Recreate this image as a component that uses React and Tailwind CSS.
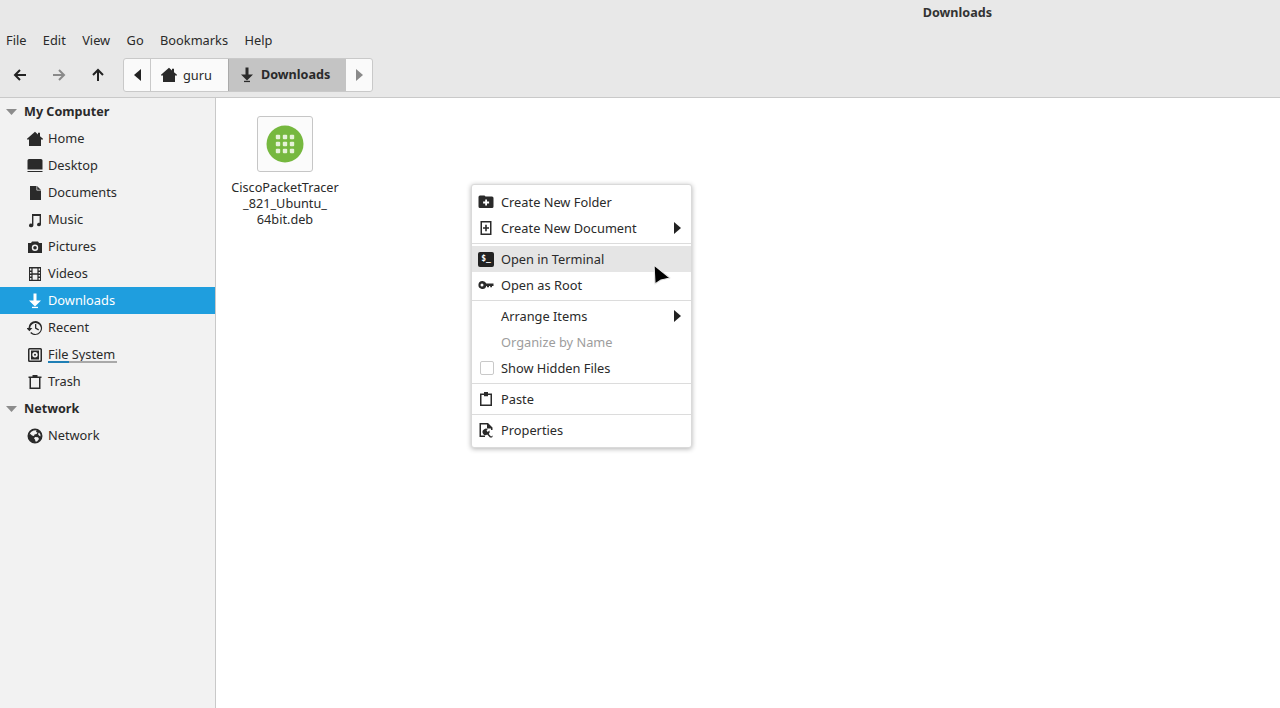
import React from "react";

const I = ({ children, s = 16, vb = 16, className = "" }) => (
  <svg width={s} height={s} viewBox={`0 0 ${vb} ${vb}`} className={`shrink-0 ${className}`} fill="currentColor">{children}</svg>
);
const HomeI = () => <I><path d="M8 .8 L11 3.4 V1.8 H13 V5.2 L16 7.8 V8.4 H14 V15 H2 V8.4 H0 V7.8 Z" /></I>;
const DesktopI = () => <I><path d="M2 1 H14 A1.5 1.5 0 0 1 15.5 2.5 V11.6 H.5 V2.5 A1.5 1.5 0 0 1 2 1Z M.5 13 H15.5 V14 H.5Z" /></I>;
const DocI = () => <I><path d="M3 1 H10 L14 5 V15 H3 Z" /><path d="M9.8 1 V5.2 H14" fill="none" stroke="#f2f2f2" strokeWidth=".7" /></I>;
const MusicI = () => <I><path d="M5 2 H14 V12.5 A2 1.8 0 1 1 12.6 10.8 V4 H6.4 V13.5 A2.2 1.8 0 1 1 5 11.8 Z" /></I>;
const CamI = () => <I><path fillRule="evenodd" d="M5 2.5 H11 L12 4 H15 V14 H1 V4 H4 Z M8 5.5 A3.2 3.2 0 1 0 8 11.9 A3.2 3.2 0 0 0 8 5.5Z" /><circle cx="8" cy="8.7" r="1.8" /></I>;
const VidI = () => <I><path fillRule="evenodd" d="M2 1 H14 V15 H2 Z M3 2.5 V4.5 H4.4 V2.5Z M3 6 V7.5 H4.4 V6Z M3 9 V10.5 H4.4 V9Z M3 12 V13.7 H4.4 V12Z M11.6 2.5 V4.5 H13 V2.5Z M11.6 6 V7.5 H13 V6Z M11.6 9 V10.5 H13 V9Z M11.6 12 V13.7 H13 V12Z M5.6 2.5 V7.3 H10.4 V2.5Z M5.6 8.7 V13.7 H10.4 V8.7Z" /></I>;
const DownI = ({ s = 16 }) => <I s={s}><path d="M6.5 .5 H9.5 V7.5 H14 L8 13.6 L2 7.5 H6.5 Z" /><rect x="5" y="13.8" width="6" height="1.3" /></I>;
const RecentI = () => <I><path d="M8.5 1 A7 7 0 1 1 3.2 13 L4.3 11.9 A5.4 5.4 0 1 0 3.1 8 H5.4 L2.4 11.2 L-.6 8 H1.5 A7 7 0 0 1 8.5 1Z" /><path d="M8 4 H9.3 V7.7 L12 9.3 L11.4 10.4 L8 8.4Z" /></I>;
const DiskI = () => <I><path fillRule="evenodd" d="M2.5 1 H13.5 A1.5 1.5 0 0 1 15 2.5 V13.5 A1.5 1.5 0 0 1 13.5 15 H2.5 A1.5 1.5 0 0 1 1 13.5 V2.5 A1.5 1.5 0 0 1 2.5 1Z M2.5 2.5 V13.5 H13.5 V2.5Z" /><path fillRule="evenodd" d="M4 3.5 H12 V12.5 H4Z M8 5 A2.7 2.7 0 1 0 8 10.4 A2.7 2.7 0 0 0 8 5Z" /><circle cx="8" cy="7.7" r="1" /></I>;
const TrashI = () => <I><path fillRule="evenodd" d="M5.5 1 H10.5 V2.5 H14.5 V4 H13.5 V15 H2.5 V4 H1.5 V2.5 H5.5 Z M4 4 V13.5 H12 V4Z" /></I>;
const GlobeI = () => <I><path fillRule="evenodd" d="M8 .5 A7.5 7.5 0 1 0 8 15.5 A7.5 7.5 0 0 0 8 .5Z M6.5 2.5 L9.5 2.2 L9 4 L10.5 4.5 L9.5 6 L7.5 6.5 L7 8 L5 7.5 L3.5 6 L2.5 6.5 A6 6 0 0 1 6.5 2.5Z M8 9 L11 9.3 L12 11 L10 13.5 L8.5 13.5 L8 11.5 L7 10.5Z M12 4.5 L13.4 6.5 L13.5 8.5 L12 7.5 L11 6Z" /></I>;
const FolderPlus = () => <I><path fillRule="evenodd" d="M.5 3 A1.5 1.5 0 0 1 2 1.5 H6.5 L7.5 2.5 H14 A1.5 1.5 0 0 1 15.5 4 V12.5 A1.5 1.5 0 0 1 14 14 H2 A1.5 1.5 0 0 1 .5 12.5Z M7.2 5.5 V7.6 H5.1 V9.4 H7.2 V11.5 H9 V9.4 H11.1 V7.6 H9 V5.5Z" /></I>;
const DocPlus = () => <I><path fillRule="evenodd" d="M2.5 1 H13.5 V15 H2.5Z M4 2.5 V13.5 H12 V2.5Z M7.2 4.8 V7.2 H5 V8.8 H7.2 V11.2 H8.8 V8.8 H11 V7.2 H8.8 V4.8Z" /></I>;
const Term = () => <span className="w-4 h-[15px] rounded-[2px] bg-[#222] text-white text-[8px] font-bold flex items-center justify-center leading-none [font-family:'DejaVu_Sans_Mono',monospace]">$_</span>;
const Key = () => <I><path fillRule="evenodd" d="M4.5 4 A4 4 0 0 1 8.3 6.5 H15.5 V9 H14 V10.3 H12.2 V9 H11 V10.3 H9 V9 H8.3 A4 4 0 1 1 4.5 4Z M4 6.5 A1.5 1.5 0 1 0 4 9.5 A1.5 1.5 0 0 0 4 6.5Z" /></I>;
const Clip = () => <I><path fillRule="evenodd" d="M6 1 H10 V2.5 H14 V15 H2 V2.5 H6Z M3.5 4 V13.5 H12.5 V4 H10 V5.3 H6 V4Z" /></I>;
const Props = () => <I><path fillRule="evenodd" d="M1.5 1 H10 L14.5 5.5 V8 H13 V6.5 H9 V2.5 H3 V13.5 H7 V15 H1.5Z" /><path d="M6 7.5 A3 3 0 0 1 9.8 6.9 L8.5 8.6 L9.7 9.9 L11.4 8.6 A3 3 0 0 1 10.8 12 L13 14.4 L15 13.5 L14 15.5 H12 L9.2 12.6 A3 3 0 0 1 6 7.5Z" /></I>;

const Tri = ({ dir, className = "" }) => {
  const d = { down: "M0 0 H11 L5.5 6Z", left: "M7 0 V12 L0 6Z", right: "M0 0 V12 L7 6Z" }[dir];
  const [w, h] = dir === "down" ? [11, 6] : [7, 12];
  return <svg width={w} height={h} viewBox={`0 0 ${w} ${h}`} className={`shrink-0 ${className}`} fill="currentColor"><path d={d} /></svg>;
};

const Arrow = ({ d, className }) => (
  <svg width="16" height="16" viewBox="0 0 16 16" className={className} fill="none" stroke="currentColor" strokeWidth="2"><path d={d} /></svg>
);

const places = [
  [HomeI, "Home"], [DesktopI, "Desktop"], [DocI, "Documents"], [MusicI, "Music"], [CamI, "Pictures"], [VidI, "Videos"],
  [DownI, "Downloads", true], [RecentI, "Recent"], [DiskI, "File System", false, true], [TrashI, "Trash"],
];

const Head = ({ t }) => (
  <div className="h-[27px] flex items-center pl-[6px] text-[12.6px] font-bold text-[#2a2a2a]">
    <Tri dir="down" className="text-[#8c8c8c] mr-[7px]" /><span className="pt-px">{t}</span>
  </div>
);
const Row = ({ Icon, t, sel, bar }) => (
  <div className={`h-[27px] flex items-center pl-[27px] gap-[5px] text-[12.8px] ${sel ? "bg-[#1f9ede] text-white" : "text-[#2a2a2a]"}`}>
    <Icon />
    <span className="relative">{t}
      {bar && <span className="absolute left-0 -right-[2px] bottom-[1px] h-[2px] bg-[#a9a9a9]"><span className="block h-full w-[21px] bg-[#1f7fb5]" /></span>}
    </span>
  </div>
);
const Sep = () => <div className="h-px bg-[#dcdcdc] mt-[2px] mb-[2px]" />;
const MI = ({ icon, t, sub, dis, hi }) => (
  <div className={`h-[26px] flex items-center text-[12.8px] ${hi ? "bg-[#e5e5e5]" : ""} ${dis ? "text-[#9d9d9d]" : "text-[#2a2a2a]"}`}>
    <span className="w-[29px] pl-[6px] flex items-center">{icon}</span>
    <span className="flex-1 pt-px">{t}</span>
    {sub && <Tri dir="right" className="mr-[10px] text-[#222]" />}
  </div>
);

export default function App() {
  return (
    <div className="w-[1280px] h-[708px] overflow-hidden flex flex-col bg-white relative [font-family:'Noto_Sans',sans-serif]">
      <header className="h-[98px] bg-[#e8e8e8] border-b border-[#c9c9c9] shrink-0 flex flex-col">
        <div className="h-[25px] pt-px flex items-center justify-end pr-[288px] text-[12.6px] font-bold text-[#333]">Downloads</div>
        <nav className="h-[30px] pt-px flex items-center pl-[6px] gap-[16.4px] text-[12.8px] text-[#2a2a2a]">
          {["File", "Edit", "View", "Go", "Bookmarks", "Help"].map((m) => <span key={m}>{m}</span>)}
        </nav>
        <div className="h-[34px] mt-[3px] flex items-center pl-[12px]">
          <Arrow d="M14 8 H3 M8 3 L3 8 L8 13" className="text-[#222]" />
          <Arrow d="M2 8 H13 M8 3 L13 8 L8 13" className="text-[#8a8a8a] ml-[23px]" />
          <Arrow d="M8 14 V3 M3 8 L8 3 L13 8" className="text-[#222] ml-[23px]" />
          <div className="ml-[17px] h-[34px] w-[250px] flex rounded-[3px] border border-[#c9c9c9] bg-[#fafafa] overflow-hidden text-[12.8px]">
            <div className="w-[27px] flex items-center justify-center border-r border-[#c9c9c9] text-[#222]"><Tri dir="left" /></div>
            <div className="w-[77px] flex items-center pl-[10px] gap-[6px] text-[#2a2a2a]"><HomeI /><span className="pt-px">guru</span></div>
            <div className="w-[118px] flex items-center pl-[10px] gap-[6px] bg-[#c4c4c4] border-l border-[#aaa] font-bold text-[12.6px] text-[#2a2a2a]"><DownI /><span className="pt-px">Downloads</span></div>
            <div className="flex-1 flex items-center justify-center text-[#8a8a8a]"><Tri dir="right" /></div>
          </div>
        </div>
      </header>
      <main className="flex-1 flex min-h-0">
        <aside className="w-[216px] shrink-0 bg-[#f2f2f2] border-r border-[#c9c9c9]">
          <Head t="My Computer" />
          {places.map(([Ic, t, sel, bar]) => <Row key={t} Icon={Ic} t={t} sel={sel} bar={bar} />)}
          <Head t="Network" />
          <Row Icon={GlobeI} t="Network" />
        </aside>
        <section className="flex-1 pt-[18px] pl-[15px]">
          <div className="w-[108px] flex flex-col items-center">
            <div className="w-[56px] h-[56px] rounded-[3px] border border-[#c6c6c6] bg-[#fbfbfb] flex items-center justify-center">
              <svg width="38" height="38" viewBox="0 0 38 38">
                <circle cx="19" cy="19" r="18.5" fill="#76b83f" />
                {[12, 19, 26].flatMap((y) => [12, 19, 26].map((x) => <rect key={`${x}${y}`} x={x - 2.2} y={y - 2.2} width="4.4" height="4.4" rx="1" fill="#e6f2d8" />))}
              </svg>
            </div>
            <div className="mt-[7px] w-[120px] text-center text-[12.7px] leading-[16px] text-[#2a2a2a]">CiscoPacketTracer<br />_821_Ubuntu_<br />64bit.deb</div>
          </div>
        </section>
      </main>

      <div className="absolute left-[471px] top-[184px] w-[221px] h-[264px] bg-white rounded-[3px] border border-[#dadada] shadow-[0_1px_5px_rgba(0,0,0,0.3)] pt-[4px] text-[#222]">
        <MI icon={<FolderPlus />} t="Create New Folder" />
        <MI icon={<DocPlus />} t="Create New Document" sub />
        <Sep />
        <MI icon={<Term />} t="Open in Terminal" hi />
        <MI icon={<Key />} t="Open as Root" />
        <Sep />
        <MI t="Arrange Items" sub />
        <MI t="Organize by Name" dis />
        <MI icon={<span className="block ml-[2px] w-[14px] h-[14px] rounded-[2px] border border-[#c9c9c9] bg-white" />} t="Show Hidden Files" />
        <Sep />
        <MI icon={<Clip />} t="Paste" />
        <Sep />
        <MI icon={<Props />} t="Properties" />
      </div>

      <svg className="absolute left-[652px] top-[264px]" width="20" height="22" viewBox="0 0 20 22">
        <path d="M2 1 L3 20 L9 16 L18 14 Z" fill="#000" stroke="#e8e8e8" strokeWidth="1.2" strokeLinejoin="round" />
      </svg>
    </div>
  );
}
